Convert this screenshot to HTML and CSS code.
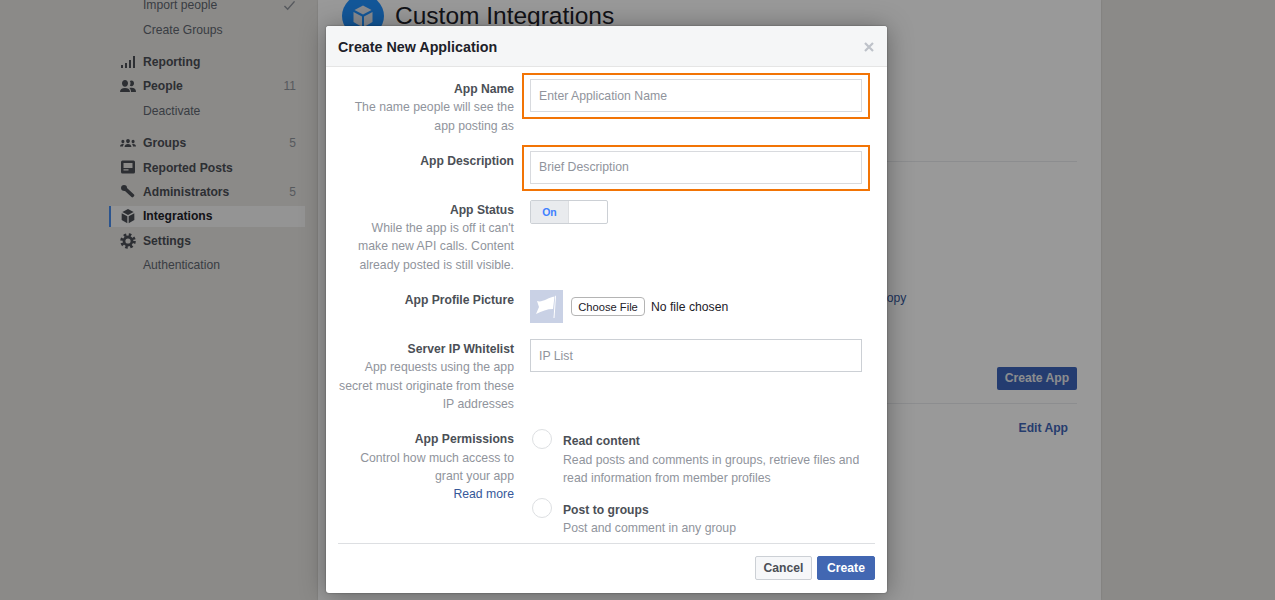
FILE: index.html
```html
<!DOCTYPE html>
<html lang="en">

<head>
    <meta charset="UTF-8">
    <title>Custom Integrations</title>
    <link rel="stylesheet" href="styles.css">
</head>

<body>
    <svg class="defs" width="0" height="0">
        <symbol id="cube" viewBox="0 0 24 24">
            <path d="M12 1.5 20.5 6 12 10.5 3.500 6Z" />
            <path d="M2.500 8 11 12.500V23L2.500 18Z" />
            <path d="M21.500 8 13 12.500V23L21.500 18Z" />
        </symbol>
    </svg>

    <div class="page">
        <nav class="sidebar">
            <div class="nav-group">
                <a class="nav-item sub">Import people
                    <svg class="count check" viewBox="0 0 14 12" width="13" height="11"><path d="M1.500 6.500 5 10 12.500 1.500" /></svg>
                </a>
                <a class="nav-item sub">Create Groups</a>
            </div>
            <div class="nav-group">
                <a class="nav-item">
                    <svg class="nav-icon" viewBox="0 0 16 16"><path d="M1 11h2v3H1zM5 9h2v5H5zM9 6h2v8H9zM13 2h2v12h-2z" /></svg>
                    Reporting
                </a>
                <a class="nav-item">
                    <svg class="nav-icon" viewBox="0 0 16 16"><path d="M5 2c1.800 0 3 1.400 3 3.300S6.800 8.800 5 8.800 2 7.200 2 5.300 3.200 2 5 2ZM11.500 2.500c1.500 0 2.500 1.200 2.500 2.800S13 8.300 11.500 8.300c-.7 0-1.200-.2-1.700-.7.500-.8.700-1.500.7-2.400s-.2-1.500-.7-2.100c.5-.4 1-.6 1.700-.6ZM0 14c0-2.700 1.800-4 5-4s5 1.300 5 4ZM11 14c0-1.600-.5-3-1.700-4 .6-.2 1.300-.2 2.200-.2 2.900 0 4.500 1.300 4.500 4.200Z" /></svg>
                    People <span class="count">11</span>
                </a>
                <a class="nav-item sub">Deactivate</a>
            </div>
            <div class="nav-group">
                <a class="nav-item">
                    <svg class="nav-icon" viewBox="0 0 16 16"><path d="M8 4c1.100 0 1.900.9 1.900 2.100S9.100 8.300 8 8.300 6.100 7.300 6.100 6.100 6.900 4 8 4ZM2.900 4.800c.9 0 1.500.7 1.500 1.700S3.800 8.300 2.900 8.300 1.400 7.500 1.400 6.500 2 4.800 2.900 4.800ZM13.100 4.800c.9 0 1.500.7 1.500 1.700s-.6 1.800-1.500 1.800-1.500-.8-1.500-1.800.6-1.700 1.500-1.700ZM4.600 12c0-2 1.300-3 3.400-3s3.400 1 3.400 3ZM0 11.500c0-1.500.9-2.400 2.900-2.400.4 0 .7 0 1 .1-.6.600-.9 1.400-.9 2.300ZM16 11.500c0-1.500-.9-2.400-2.900-2.400-.4 0-.7 0-1 .1.600.6.9 1.400.9 2.300Z" /></svg>
                    Groups <span class="count">5</span>
                </a>
                <a class="nav-item">
                    <svg class="nav-icon" viewBox="0 0 16 16"><path fill-rule="evenodd" d="M2.500 1.500h11a1.500 1.500 0 0 1 1.500 1.500v10a1.500 1.500 0 0 1-1.500 1.500h-11A1.500 1.500 0 0 1 1 13V3a1.500 1.500 0 0 1 1.500-1.500ZM3.500 4v5h9V4ZM3.500 10.200v1.300h5v-1.300Z" /></svg>
                    Reported Posts
                </a>
                <a class="nav-item">
                    <svg class="nav-icon" viewBox="0 0 16 16"><path d="M4 1C6 1 7.200 2.300 7 4.100l7 6.400a1.200 1.200 0 0 1 0 1.700l-.8.800a1.200 1.200 0 0 1-1.700 0L5 7C2.800 7.300 1 6 1 4 1 2.300 2.300 1 4 1Z" /></svg>
                    Administrators <span class="count">5</span>
                </a>
                <a class="nav-item active">
                    <svg class="nav-icon"><use href="#cube" /></svg>
                    Integrations
                </a>
                <a class="nav-item">
                    <svg class="nav-icon gear" viewBox="0 0 16 16">
                        <circle class="gear-teeth" cx="8" cy="8" r="6.300" />
                        <circle class="gear-ring" cx="8" cy="8" r="4" />
                    </svg>
                    Settings
                </a>
                <a class="nav-item sub">Authentication</a>
            </div>
        </nav>

        <main class="panel">
            <header class="panel-head">
                <span class="logo"><svg width="24" height="24"><use href="#cube" /></svg></span>
                <h1>Custom Integrations</h1>
            </header>
            <hr class="rule first-rule">
            <p class="copy-link">Copy</p>
            <div class="create-row"><a class="create-app">Create App</a></div>
            <hr class="rule">
            <div class="edit-row"><a class="edit-app">Edit App</a></div>
        </main>
    </div>

    <div class="overlay"></div>

    <section class="modal">
        <div class="modal-head">
            <h2>Create New Application</h2>
            <svg class="close" viewBox="0 0 10 10" width="10" height="10"><path d="M1 1 9 9M9 1 1 9" /></svg>
        </div>

        <div class="modal-body">
            <div class="field">
                <div class="field-label"><b>App Name</b>The name people will see the<br>app posting as</div>
                <div class="highlight"><input class="text-input" type="text" placeholder="Enter Application Name"></div>
            </div>
            <div class="field">
                <div class="field-label"><b>App Description</b></div>
                <div class="highlight"><input class="text-input" type="text" placeholder="Brief Description"></div>
            </div>
            <div class="field">
                <div class="field-label"><b>App Status</b>While the app is off it can't<br>make new API calls. Content<br>already posted is still visible.</div>
                <div class="toggle"><span class="toggle-on">On</span><span class="toggle-off"></span></div>
            </div>
            <div class="field">
                <div class="field-label"><b>App Profile Picture</b></div>
                <div class="picture-row">
                    <span class="picture">
                        <svg viewBox="0 0 33 33" width="33" height="33"><path d="M7 11C12 13 17 8 24.500 6.500L23 19C17 19 12 21 6 24L9 17Z" /><path d="M25.200 5.500 26 6 24.500 28 23.500 28Z" /></svg>
                    </span>
                    <button class="choose-file" type="button">Choose File</button>
                    <span class="no-file">No file chosen</span>
                </div>
            </div>
            <div class="field">
                <div class="field-label"><b>Server IP Whitelist</b>App requests using the app<br>secret must originate from these<br>IP addresses</div>
                <input class="text-input" type="text" placeholder="IP List">
            </div>
            <div class="field">
                <div class="field-label"><b>App Permissions</b>Control how much access to<br>grant your app<br><a class="read-more">Read more</a></div>
                <div class="options">
                    <div class="option">
                        <span class="radio"></span>
                        <div class="option-text"><b>Read content</b>Read posts and comments in groups, retrieve files and<br>read information from member profiles</div>
                    </div>
                    <div class="option">
                        <span class="radio"></span>
                        <div class="option-text"><b>Post to groups</b>Post and comment in any group</div>
                    </div>
                </div>
            </div>
        </div>

        <div class="modal-foot">
            <button class="btn" type="button">Cancel</button>
            <button class="btn btn-primary" type="button">Create</button>
        </div>
    </section>
</body>

</html>
```

FILE: styles.css
```css
* {
    box-sizing: border-box;
}

html,
body {
    margin: 0;
    height: 600px;
    overflow: hidden;
}

body {
    position: relative;
    font-family: "Liberation Sans", Arial, sans-serif;
    font-size: 12.15px;
    background-color: #e8e6e3;
    color: #1d2129;
}

.defs {
    position: absolute;
}

.page {
    display: flex;
    height: 600px;
    padding-left: 109px;
}

/* sidebar */
.sidebar {
    width: 196px;
    margin-top: -7px;
    margin-right: 13px;
}

.nav-group {
    margin-bottom: 8px;
}

.nav-item {
    display: flex;
    align-items: center;
    height: 24.4px;
    padding-left: 32px;
    padding-right: 9px;
    border-left: 2px solid transparent;
    font-weight: bold;
    color: #4b4f56;
    position: relative;
}

.nav-item.sub {
    font-weight: normal;
    color: #616770;
}

.nav-item.active {
    height: 20.4px;
    margin: 2px 0;
    background-color: #f7f7f7;
    border-left-color: #488ded;
    color: #1d2129;
}

.nav-icon {
    position: absolute;
    left: 9px;
    top: 4px;
    width: 16px;
    height: 16px;
    fill: #4b4f56;
}

.active .nav-icon {
    top: 2px;
}

.count {
    margin-left: auto;
    font-weight: normal;
    font-size: 12px;
    color: #90949c;
}

.check {
    fill: none;
    stroke: #90949c;
    stroke-width: 1.600;
}

.gear-teeth {
    fill: none;
    stroke: #4b4f56;
    stroke-width: 3;
    stroke-dasharray: 2.500 2.450;
}

.gear-ring {
    fill: none;
    stroke: #4b4f56;
    stroke-width: 2.800;
}

/* page behind the dialog */
.panel {
    width: 783px;
    padding: 0 24px;
    background-color: #fff;
    box-shadow: 0 0 2px rgba(0, 0, 0, .15);
}

.panel-head {
    display: flex;
    align-items: center;
    gap: 11px;
    margin-top: -5px;
}

.logo {
    display: flex;
    align-items: center;
    justify-content: center;
    width: 42px;
    height: 42px;
    border-radius: 50%;
    background-color: #2191ff;
    fill: #e4e8f0;
}

h1 {
    margin: 0;
    font-size: 24.5px;
    font-weight: normal;
}

.rule {
    margin: 0;
    border: 0;
    border-top: 1px solid #e9ebee;
}

.first-rule {
    margin-top: 124px;
}

.copy-link {
    margin: 129px 0 0 536px;
    line-height: 14px;
    color: #365899;
}

.create-row {
    display: flex;
    justify-content: flex-end;
    margin-top: 62px;
    margin-bottom: 13px;
}

.create-app {
    display: block;
    width: 80px;
    height: 23px;
    line-height: 23px;
    text-align: center;
    border-radius: 2px;
    background-color: #3c64bb;
    color: #e9ebee;
    font-weight: bold;
}

.edit-row {
    margin-top: 17px;
    padding-right: 9px;
    text-align: right;
}

.edit-app {
    font-weight: bold;
    color: #3f66b8;
}

.overlay {
    position: absolute;
    inset: 0;
    background-color: rgba(0, 0, 0, .4);
}

/* dialog */
.modal {
    position: absolute;
    left: 326px;
    top: 26px;
    width: 561px;
    background-color: #fff;
    border-radius: 3px;
    box-shadow: 0 2px 26px rgba(0, 0, 0, .35), 0 0 2px rgba(0, 0, 0, .4);
}

.modal-head {
    display: flex;
    align-items: center;
    justify-content: space-between;
    height: 41px;
    padding: 2px 13px 0 12px;
    background-color: #f5f6f7;
    border-bottom: 1px solid #e5e5e5;
    border-radius: 3px 3px 0 0;
}

h2 {
    margin: 0;
    font-size: 14.3px;
    font-weight: bold;
}

.close {
    fill: none;
    stroke: #bec2c9;
    stroke-width: 2.200;
}

.modal-body {
    display: flex;
    flex-direction: column;
    gap: 16px;
    padding: 12px 25px 0 12px;
}

.field {
    display: grid;
    grid-template-columns: 176px 332px;
    column-gap: 16px;
    align-items: start;
}

.field-label {
    padding-top: 1px;
    text-align: right;
    font-size: 12.25px;
    line-height: 18.300px;
    color: #90949c;
    white-space: nowrap;
}

.field-label b {
    display: block;
    font-size: 12.15px;
    color: #4b4f56;
}

.read-more {
    color: #365899;
}

.highlight {
    margin: -6px -8px -7px;
    height: 46px;
    padding: 4px 6px 5px;
    border: 2px solid #f27405;
}

.text-input {
    display: block;
    width: 332px;
    height: 33px;
    padding: 0 8px;
    border: 1px solid #ccd0d5;
    outline: 0;
    font: inherit;
    font-size: 12.25px;
    color: #1d2129;
}

.highlight .text-input {
    border-color: #d8dade;
}

.text-input::placeholder {
    color: #90949c;
    opacity: 1;
}

.toggle {
    display: flex;
    width: 78px;
    height: 24px;
    border: 1px solid #ccd0d5;
    border-radius: 2px;
}

.toggle-on {
    width: 38px;
    line-height: 22px;
    text-align: center;
    background-color: #e9ebee;
    border-right: 1px solid #dddfe2;
    color: #4080ff;
    font-size: 10.5px;
    font-weight: bold;
}

.toggle-off {
    flex: 1;
}

.picture-row {
    display: flex;
    align-items: center;
}

.picture {
    display: block;
    width: 33px;
    height: 33px;
    margin-right: 8px;
    background-color: #c9d1e5;
    fill: #fff;
}

.picture svg {
    display: block;
}

.choose-file {
    width: 74px;
    height: 19px;
    margin-right: 6px;
    padding: 0;
    background-color: #fff;
    border: 1px solid #b4b4b4;
    border-radius: 4px;
    font-family: inherit;
    font-size: 11.2px;
    color: #1d2129;
}

.no-file {
    font-size: 12.2px;
}

.options {
    display: flex;
    flex-direction: column;
    gap: 11px;
}

.option {
    display: flex;
    padding-left: 2px;
}

.radio {
    flex: none;
    width: 20px;
    height: 20px;
    margin-right: 11px;
    border: 1px solid #dddfe2;
    border-radius: 50%;
    background-color: #fff;
}

.option-text {
    padding-top: 3px;
    font-size: 12.25px;
    line-height: 18.300px;
    color: #90949c;
    white-space: nowrap;
}

.option-text b {
    display: block;
    font-size: 12.15px;
    color: #4b4f56;
}

.modal-foot {
    display: flex;
    justify-content: flex-end;
    gap: 5px;
    margin: 5px 12px 0;
    padding: 12px 0 13px;
    border-top: 1px solid #dddfe2;
}

.btn {
    height: 24px;
    padding: 0;
    width: 57px;
    border: 1px solid #ccd0d5;
    border-radius: 2px;
    background-color: #f6f7f9;
    color: #4b4f56;
    font-family: inherit;
    font-size: 12.15px;
    font-weight: bold;
}

.btn-primary {
    width: 58px;
    background-color: #4267b2;
    border-color: #4267b2;
    color: #fff;
}
```
